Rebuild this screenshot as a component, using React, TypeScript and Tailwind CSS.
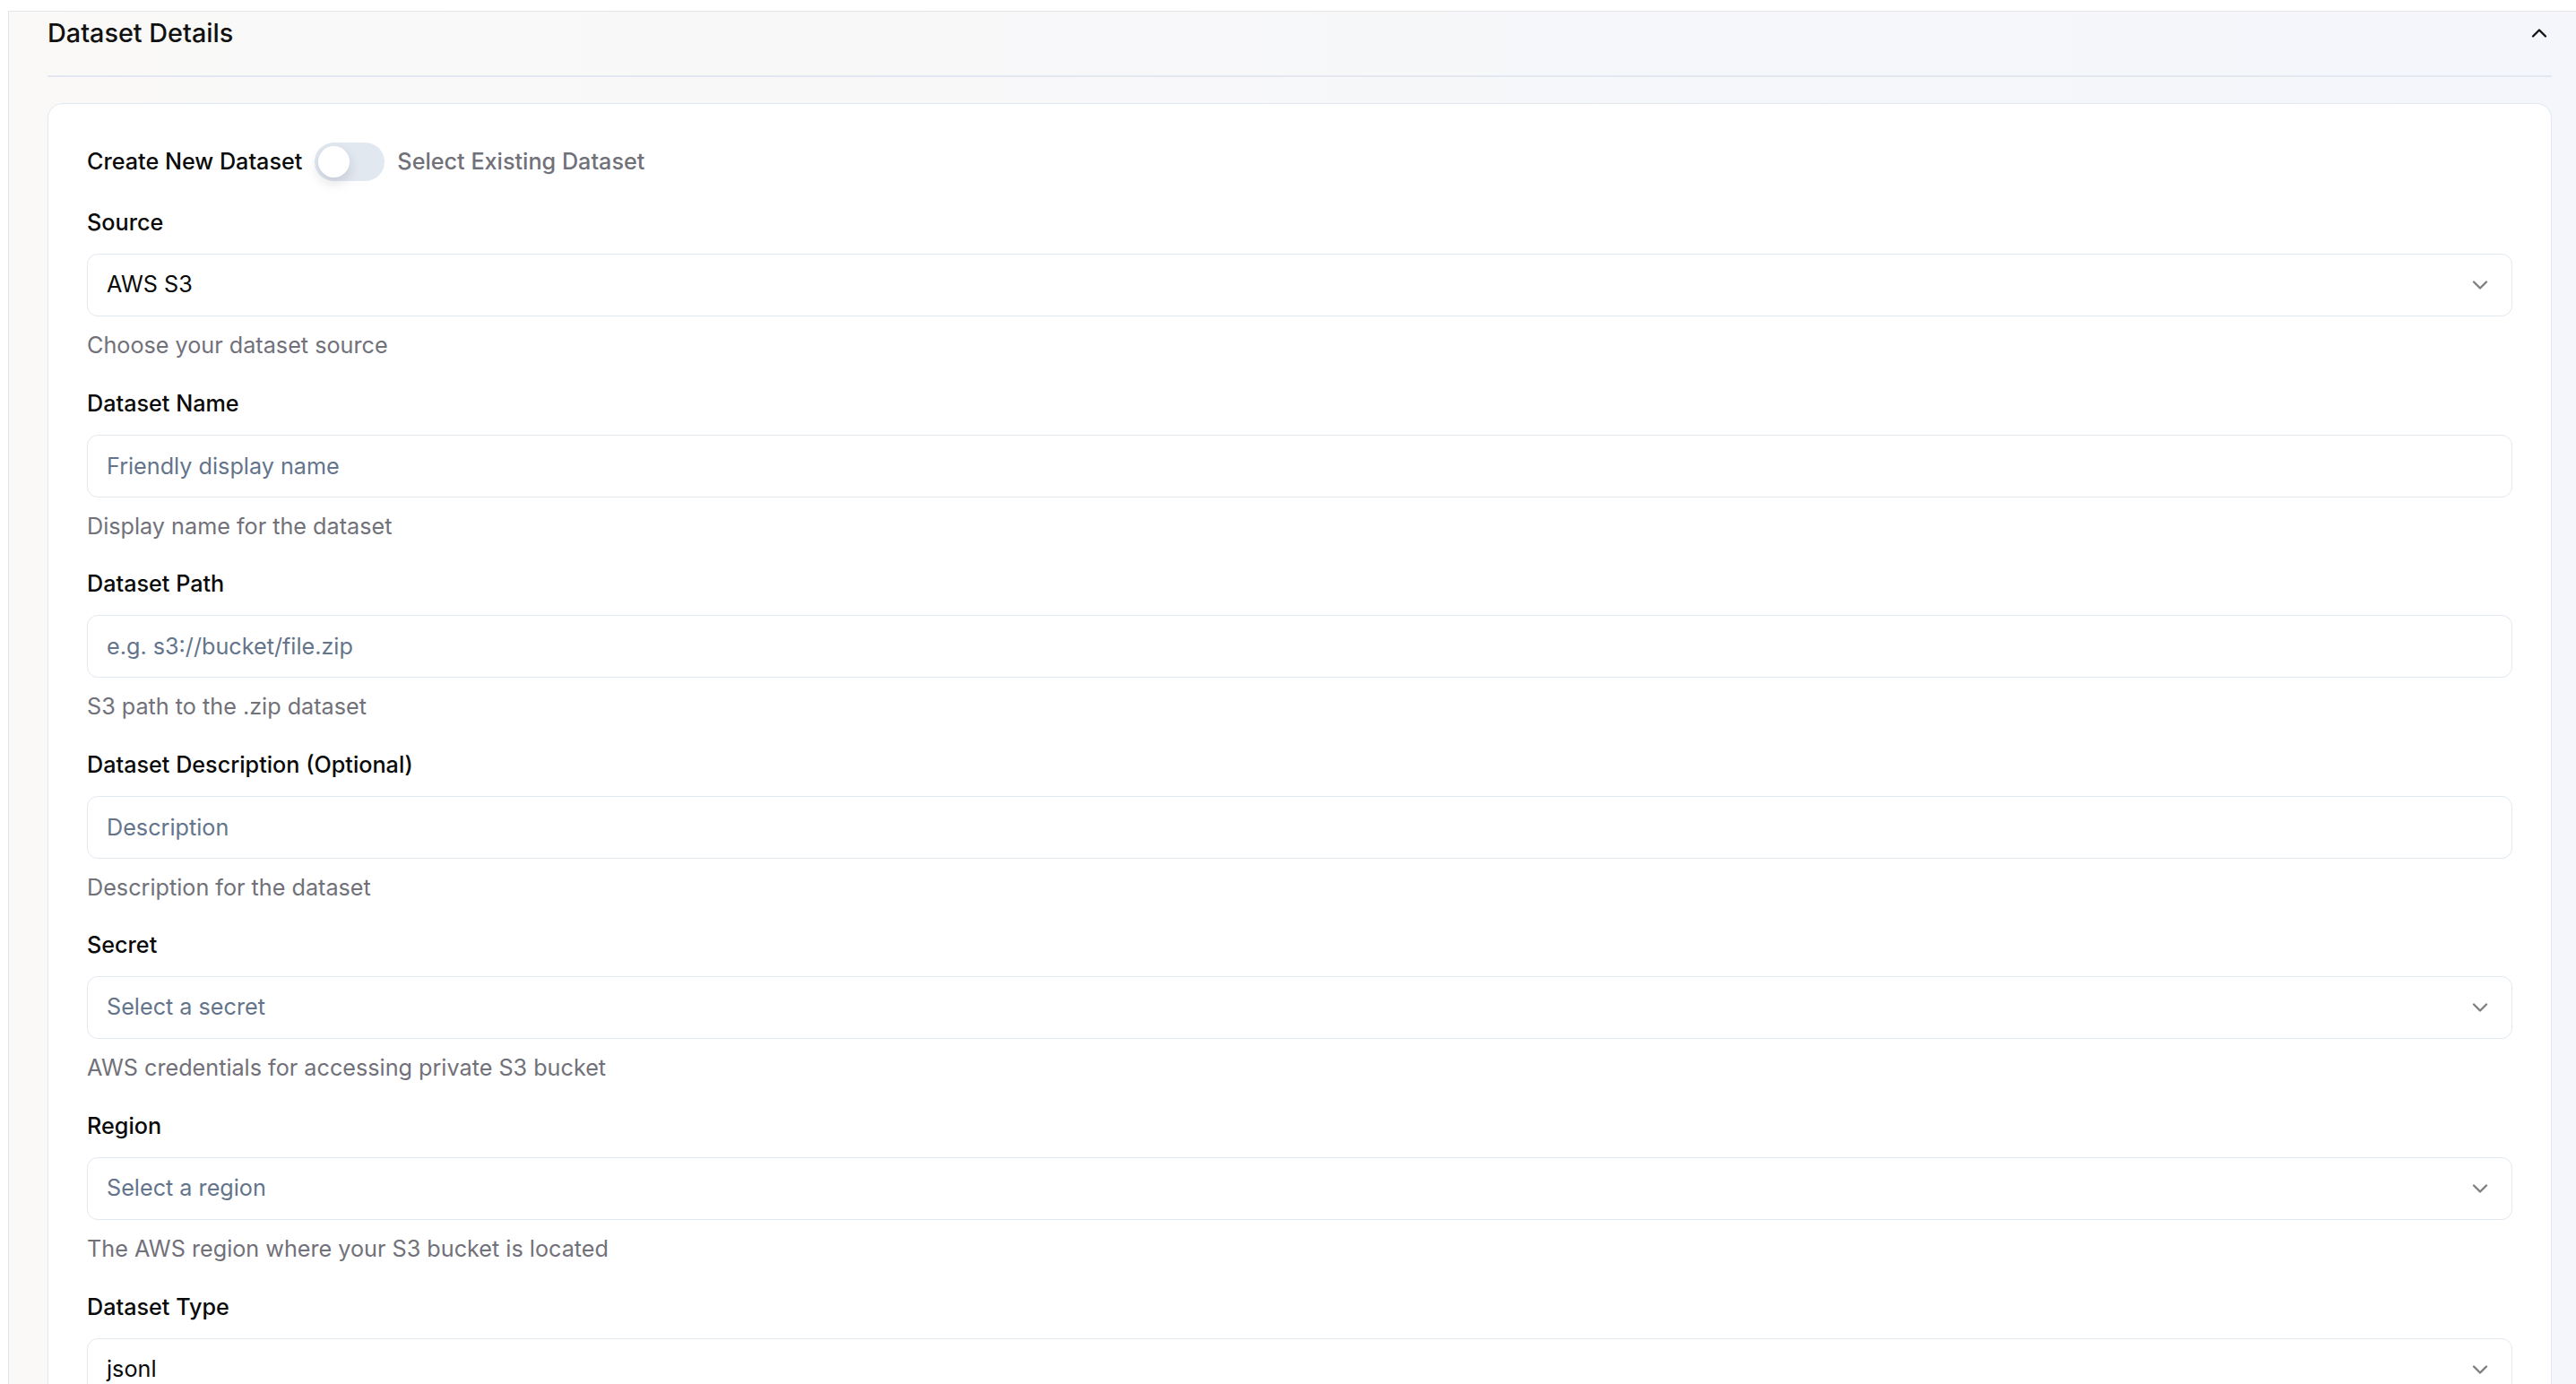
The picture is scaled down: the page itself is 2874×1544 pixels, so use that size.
import {ChevronDown, ChevronUp} from "lucide-react";

type Field = {
    label: string;
    kind: "select" | "input";
    value?: string;
    placeholder?: string;
    help: string;
};

const fields: Field[] = [
    {label: "Source", kind: "select", value: "AWS S3", help: "Choose your dataset source"},
    {label: "Dataset Name", kind: "input", placeholder: "Friendly display name", help: "Display name for the dataset"},
    {label: "Dataset Path", kind: "input", placeholder: "e.g. s3://bucket/file.zip", help: "S3 path to the .zip dataset"},
    {label: "Dataset Description (Optional)", kind: "input", placeholder: "Description", help: "Description for the dataset"},
    {label: "Secret", kind: "select", placeholder: "Select a secret", help: "AWS credentials for accessing private S3 bucket"},
    {label: "Region", kind: "select", placeholder: "Select a region", help: "The AWS region where your S3 bucket is located"},
    {label: "Dataset Type", kind: "select", value: "jsonl", help: "The format of the files in your dataset"},
];

function FormField({field, first}: {field: Field; first: boolean}) {
    return (
        <div className={first ? "mt-[34px]" : "mt-[34.6px]"}>
            <label className="block text-[25.2px] font-medium leading-[24px] text-[#0a0a0a]">
                {field.label}
            </label>
            {field.kind === "select" ? (
                <button
                    type="button"
                    className="mt-[23px] flex h-[70px] w-full items-center justify-between rounded-[12px] border border-[#e2e8f0] bg-white px-[21px] text-left"
                >
                    <span className={`text-[25.2px] ${field.value ? "text-[#0a0a0a]" : "text-[#64748b]"}`}>
                        {field.value ?? field.placeholder}
                    </span>
                    <ChevronDown className="h-[28px] w-[28px] text-black opacity-50" strokeWidth={2}/>
                </button>
            ) : (
                <input
                    className="mt-[23px] block h-[70px] w-full rounded-[12px] border border-[#e2e8f0] bg-white px-[21px] text-[25.2px] text-[#0a0a0a] outline-none placeholder:text-[#64748b]"
                    placeholder={field.placeholder}
                />
            )}
            <p className="mt-[15px] text-[25.2px] leading-[35px] text-[#71717a]">{field.help}</p>
        </div>
    );
}

export default function App() {
    return (
        <div className="min-h-screen bg-white pt-[12px] pl-[9px] font-['Inter',sans-serif]">
            <div className="border-l border-t border-[#e5e5e5] bg-gradient-to-r from-[#faf9f8] to-[#f4f6fb] pl-[43px] pr-[27px] pb-[60px]">
                <div className="flex items-center justify-between border-b-2 border-[#e3e8f0] pt-[4px] pb-[27px]">
                    <h2 className="text-[28.8px] font-medium leading-[40px] text-[#111]">Dataset Details</h2>
                    <ChevronUp className="h-[28px] w-[28px] text-[#111]" strokeWidth={2}/>
                </div>

                <div className="mt-[29px] rounded-[17px] border border-[#e2e8f0] bg-white p-[43px]">
                    <div className="flex items-center gap-[14px]">
                        <span className="text-[25.2px] font-medium text-[#0a0a0a]">Create New Dataset</span>
                        <div className="flex h-[43px] w-[78px] items-center rounded-full bg-[#e2e8f0] px-[4px]">
                            <div className="h-[35px] w-[35px] rounded-full bg-white shadow-[0_6px_14px_rgba(15,23,42,0.14)]"/>
                        </div>
                        <span className="text-[25.2px] font-medium text-[#71717a]">Select Existing Dataset</span>
                    </div>

                    {fields.map((field, i) => (
                        <FormField key={field.label} field={field} first={i === 0}/>
                    ))}
                </div>
            </div>
        </div>
    );
}
